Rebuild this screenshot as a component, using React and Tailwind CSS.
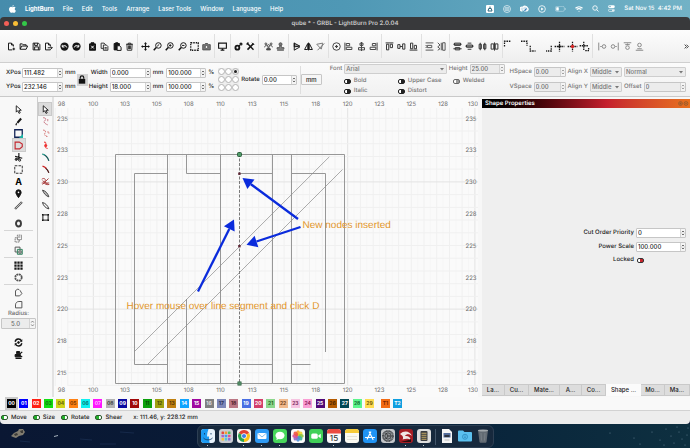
import React, { useId } from "react";

const K = "#161616";

/* 12x12 line icons used by the tool bars */
const ICONS = {
  newFile: <><path d="M7 10.5H2V1.5h4l2.5 2.5v2M6 1.5V4h2.5" /><path d="M9 7.5v3.5M7.3 9.3h3.5" /></>,
  open: <path d="M1.5 9.5V2.5h3l1 1.2h4v1.6M1.5 9.7l2-4.3h8l-2 4.3z" />,
  save: <><path d="M1.5 1.5h7l2 2v7h-9z" /><path d="M3.5 1.5v3h4v-3M3.5 10.5v-4h5v4" /></>,
  exportFile: <path d="M8.500 6V4L6 1.500H2v9h6.500V9.500M6 1.500V4h2.500M5 7.700h6M9.500 6.200L11 7.700 9.500 9.200" />,
  undo: <><circle cx="6" cy="6" r="5.500" fill={K} stroke="none" /><path stroke="#fff" d="M3.200 6.500a3 3 0 0 1 5.700.8M3 3.800v2.900h2.900" /></>,
  redo: <><circle cx="6" cy="6" r="5.500" fill={K} stroke="none" /><path stroke="#fff" d="M8.800 6.500a3 3 0 0 0-5.700.8M9 3.800v2.900H6.100" /></>,
  cut: <><path fill={K} d="M2 2.500h8v8.500H2zM4 1h4v1.500H4z" /><path stroke="#fff" d="M4.300 5l3.400 3.600M7.700 5L4.300 8.600" /></>,
  copy: <g stroke="#333"><path d="M1.500 1.500h4l2 2v5h-6z" /><path fill="#f6f6f6" d="M4.500 4h4l2 2v5h-6z" /><path d="M6 7.500h3M6 9.200h3" /></g>,
  paste: <><path fill={K} d="M1.500 2h7v8.500h-7zM3.500 1h3v1.200h-3z" /><path fill="#f6f6f6" d="M5.500 5h3.200L10.800 7v4.200H5.500z" /></>,
  trash: <g stroke="#333"><path d="M1.500 3h9M4.500 3V1.500h3V3M2.500 3l.5 8h6l.5-8z" /><path d="M4.800 4.500v5M7.200 4.500v5M6 4.500v5" /></g>,
  move: <><path strokeWidth="1.600" d="M6 1.500v9M1.500 6h9" /><path fill={K} d="M6 .3L7.500 2.300h-3zM6 11.700L4.500 9.700h3zM.3 6l2-1.500v3zM11.700 6l-2 1.500v-3z" strokeWidth=".4" /></>,
  zoom: <><circle cx="7.200" cy="4.600" r="3.700" /><path strokeWidth="2" d="M4.300 7.300L1 11" /><path d="M5.500 5.700l2.800-2.500" /></>,
  zoomIn: <><circle cx="7.200" cy="4.600" r="3.700" /><path strokeWidth="2" d="M4.300 7.300L1 11" /><path d="M5.400 4.600h3.200M7 3v3.200" /></>,
  zoomOut: <><circle cx="7.200" cy="4.600" r="3.700" /><path strokeWidth="2" d="M4.300 7.300L1 11" /><path d="M5.400 4.600h3.200" /></>,
  frame: <path strokeWidth="1.700" strokeDasharray="2 1.330" d="M1 1h10v10H1z" />,
  camera: <g stroke="#555"><path fill="#777" d="M1 3.500h2.500L4.500 2h3l1 1.500H11v7H1z" /><circle cx="6" cy="6.700" r="2" fill="#eee" /></g>,
  monitor: <><path strokeWidth="1.500" d="M.8 1.500h10.400v6.800H.8z" /><path strokeWidth="1.600" d="M6 8.500v2M3.500 10.800h5" /></>,
  gears: <><circle cx="4.500" cy="7.500" r="2.600" strokeWidth="2.500" /><circle cx="9.300" cy="2.700" r="1.300" strokeWidth="1.600" /><path d="M6.500 5.500l2-2" /></>,
  wrench: <><path strokeWidth="2.200" d="M2 10.200L10 2" /><path strokeWidth="1.800" d="M2 2l8 8.300M.8 3.200L3.200.8" /><path d="M8 1l3 3" /></>,
  group: <g stroke="#444"><circle cx="6" cy="5" r="1.500" /><path d="M3.500 10.500c0-4 5-4 5 0z" fill="#555" /><circle cx="2.500" cy="2.500" r="1.200" /><circle cx="9.500" cy="2.500" r="1.200" /><path d="M.8 7c0-2 2-2.500 3-2M11.200 7c0-2-2-2.500-3-2" /></g>,
  stamp: <g stroke="#555"><circle cx="6" cy="3" r="2" fill="#777" /><path fill="#999" d="M5 5h2v2.500h3.500V9.500h-9V7.500H5zM1.500 11h9" /></g>,
  flip: <><path fill="#999" d="M3 1.500l7.500 4L3 6.500z" /><path d="M3 10.800l7.500-4.200M3 1v10" /></>,
  mirror: <path d="M5 2v8H.8zM7 2v8h4.200zM6 .8v10.400" />,
  mirrorLine: <g stroke="#777"><path d="M1 3l8-1.500-2 8zM2 11L11 2" /></g>,
  target: <g stroke="#444"><circle cx="6" cy="6" r="5" /><path strokeWidth="1.600" d="M6 4v4M4 6h4" /></g>,
  alignL: <g stroke="#444"><path d="M1.200.8v10.400M3 2h4.500v3H3zM3 7h7.500v3H3z" /></g>,
  alignC: <g stroke="#444"><path d="M4 1.500h4v3H4zM2 7.500h8v3H2zM6 0v12" /></g>,
  alignR: <g stroke="#444"><path d="M10.800.8v10.400M4.500 2H9v3H4.500zM1.500 7H9v3H1.500z" /></g>,
  alignT: <g stroke="#333"><path d="M.8 1.200h10.400M2 3v7.500h3V3zM7 3v4.500h3V3z" /></g>,
  alignM: <g stroke="#333"><path d="M1 3.500h3v5H1zM7.500 2.500h3v7h-3zM4 6h3.500" /></g>,
  alignB: <g stroke="#333"><path d="M.8 10.800h10.400M2 1.500V9h3V1.500zM7 4.500V9h3V4.500z" /></g>,
  spreadV: <g stroke="#555"><path d="M.8 1.200h10.400M.8 10.800h10.400M3 4.500h6v3H3zM.8 4l2 2-2 2" /></g>,
  spreadH: <g stroke="#555"><path d="M10.800 1v10H7.500V1zM1 1l3 3-3 2.500 3 2.500-3 2M5.700 1v10" /></g>,
  distV: <g stroke="#333"><path d="M2 1.500h8v3H2zM3 7.500h6v3H3zM.5 3h11M.5 9h11" /></g>,
  distC: <g stroke="#333"><path d="M2 4h8v3H2zM3.500 1.500h5M3.500 9.700h5M.5 5.500h11" /></g>,
  distH: <g stroke="#333"><path d="M1.500 3h3v6h-3zM7.500 3h3v6h-3zM3 1v10M9 1v10" /></g>,
  distM: <g stroke="#333"><path d="M1.500 2.500H5v7H1.500zM7 2.500h3.500v7H7zM6 .5v11" /></g>,
  cornerTL: <path strokeWidth="1.700" strokeDasharray="2 1.200" d="M-2 6V-1H6" />,
  cornerTR: <path strokeWidth="1.700" strokeDasharray="2 1.200" d="M4 -1h8V5" />,
  cornerBL: <path strokeWidth="1.700" strokeDasharray="2 1.200" d="M-1 5v7h7" />,
  cornerBR: <path strokeWidth="1.700" strokeDasharray="2 1.200" d="M11 5v7H4" />,
  crossK: <><path strokeWidth="1.700" strokeDasharray="2 1" d="M6 -.5v13M-.5 6h13" /><circle cx="6" cy="6" r="1.200" fill={K} /></>,
  crossR: <><path strokeWidth="1.700" strokeDasharray="2 1" d="M6 -.5v13M-.5 6h13" /><circle cx="6" cy="6" r="1.700" fill="#d22" stroke="#d22" /></>,
  crossD: <path strokeWidth="1.700" strokeDasharray="2 1" d="M5 -.5v11M-.5 5H11M7 11.500h5M11.500 8v3" />,
  moveL: <g stroke="#888"><path d="M1 .8v10.400M3 6h2" /><circle cx="8" cy="6" r="2.400" /></g>,
  moveR: <g stroke="#888"><path d="M11 .8v10.400M7 6h2" /><circle cx="4" cy="6" r="2.400" /></g>,
  moveT: <g stroke="#888"><path d="M1 1h10M6 2v2M3 3.500h6" /><circle cx="6" cy="7.500" r="2.400" /></g>,
  moveB: <g stroke="#888"><path d="M1 11h10M3 9h6" /><circle cx="6" cy="4" r="2.400" /></g>,
  arrow: <path fill="#fff" strokeWidth="1.200" d="M3 1v8.500l2-2 1.700 3.700 1.600-.8L6.700 7h3z" />,
  pencil: <><path strokeWidth="2.800" d="M9.500 2L4.500 7.800" /><path strokeWidth="1.600" d="M3.500 8.300L2.500 11" /></>,
  square: <><path stroke="#125" strokeWidth="1.700" d="M1 1h10v10H1z" /><path fill="#19b5a5" stroke="none" d="M12 6.500V12H6.500z" /></>,
  polygon: <path stroke="#c4262e" strokeWidth="1.500" d="M1.500 1.500h5.500l4 2.500v3.500L7.500 10.500h-6z" />,
  scissors: <><path strokeWidth="1.500" d="M6.500 0v7.500M1.500 4.500L11 7M7 7.500L2 8.500" /><circle cx="3" cy="8.500" r="1.400" /><circle cx="7.500" cy="9.500" r="1.400" /></>,
  select: <path stroke="#333" strokeDasharray="3.500 1.500" d="M1 1h10v10H1z" />,
  pin: <><path fill={K} d="M6 11.500C4 8.500 2.500 6.500 2.500 4.500a3.500 3.500 0 0 1 7 0C9.500 6.500 8 8.500 6 11.500z" /><circle cx="6" cy="4.500" r="1.100" fill="#fff" stroke="none" /></>,
  ruler: <g stroke="#555"><path fill="#bbb" d="M1 9.500L9.500 1l1.500 1.500L2.500 11z" /></g>,
  ring: <ellipse cx="6" cy="6" rx="3.300" ry="4" stroke="#3c3c3c" strokeWidth="2.600" />,
  weld: <g stroke="#777"><path d="M1.500 5h3V1.500H10v6H7v3.200H1.500z" strokeDasharray="2 .7" /><path d="M4.500 5v2.700H7M5.500 4h3" /></g>,
  subtract: <><path stroke="#555" d="M1.500 1.500H8V8H1.500z" /><path stroke="#2f7f5b" fill="#dcefe4" d="M4.500 4.500H11V11H4.500z" /><path stroke="#555" d="M6.500 6.500h3v3h-3z" /></>,
  grid: <path fill={K} stroke="none" d="M.5.5h3v3h-3zM4.500.5h3v3h-3zM8.500.5h3v3h-3zM.5 4.500h3v3h-3zM4.500 4.500h3v3h-3zM8.500 4.500h3v3h-3zM.5 8.500h3v3h-3zM4.500 8.500h3v3h-3zM8.500 8.500h3v3h-3z" />,
  circleArray: <circle cx="6" cy="6" r="4.300" stroke="#555" strokeWidth="2.300" strokeDasharray="2.600 .78" />,
  offset: <path stroke="#555" d="M2 3.500v7h5.500L10.500 7.500 8 3M2 3.500L5 1.500l2 .7" />,
  radius: <path stroke="#555" d="M2 10.500V6.500C2 4 4 2 6.500 2h4v8.500z" />,
  rotate: <><path strokeWidth="1.900" d="M1.500 5a4.500 4.500 0 0 1 8.500-1M10.500 7A4.500 4.500 0 0 1 2 8" /><circle cx="6" cy="6" r="1.200" fill={K} /><path fill={K} d="M10.800 2v3H8zM1.200 10V7H4z" strokeWidth=".4" /></>,
  printer: <><path fill={K} d="M1.500 6h7v3h-7zM3.500 2h4v3h-4z" /><path strokeWidth="1.700" d="M2 11h8M7.500 5.500l3.500-3M8 8l3 .8" /></>,
  nodeS: <path stroke="#b56" strokeDasharray="2 .8" d="M3 1c4 0 4 2.500 2 4s0 4 4 5.500M9 3v3" />,
  nodeM: <path stroke="#c55" strokeDasharray="1.700 1" d="M3 1.500c4 0 3 3 2 4.500s1 4 4 4M8.500 4h2v2" />,
  nodeX: <><path stroke="#e55" strokeWidth="1.400" d="M4 1.500c3 0 3 2 2 4s0 4 3 4.500" /><circle cx="6.300" cy="6" r="2" fill="#e33" stroke="none" /></>,
  curveG: <><path stroke="#155" strokeWidth="1.600" d="M2 1.500c4 1 7 4 8.500 9" /><path stroke="#2a9" d="M2 1.500l3 1" /></>,
  curveR: <><path stroke="#411" strokeWidth="1.600" d="M6 4c2 1.500 3.500 4 4.500 6.500" /><path stroke="#c22" strokeWidth="2" d="M2 1.500c2 .5 3.500 1.300 5 3" /></>,
  delNode: <path stroke="#a44" d="M1 3c4-3 6 1 4 3s1 5 6 4M2 10L10 2M2 5l8 5M1 8h10" />,
  curveD: <path stroke="#444" fill="#bbb" d="M2 1.500c4 1 7 4 8.500 9C7 9.500 3.500 6 2 1.500z" />,
  curveE: <path stroke="#333" d="M2 2c4 1 7 4 8.500 8.500C6 9.500 3 6 2 2z" />,
  nodeBox: <><path d="M2.500 2.500h7v7h-7z" /><path fill={K} stroke="none" d="M1.300 1.300h2v2h-2zM8.700 1.300h2v2h-2zM1.300 8.700h2v2h-2zM8.700 8.700h2v2h-2z" /></>,
};

function Icon({ name, className = "size-[9px]" }) {
  return (
    <svg viewBox="0 0 12 12" className={`${className} shrink-0 overflow-visible`} fill="none" stroke={K} strokeWidth="1.3" aria-hidden="true">
      {ICONS[name]}
    </svg>
  );
}

const MENUS = ["File", "Edit", "Tools", "Arrange", "Laser Tools", "Window", "Language", "Help"];

function MenuBar() {
  return (
    <header className="flex h-[17px] shrink-0 items-center gap-[9px] bg-linear-to-r from-[#468cac] via-[#4f98b5] to-[#72b2c6] pr-2 pl-[9px] text-white">
      <svg viewBox="0 0 14 16" className="h-[8px] w-[7px]" fill="#fff" aria-hidden="true">
        <path d="M9.500 0c.1 1.700-1.300 3.200-2.800 3.200C6.500 1.700 8 .2 9.500 0zM7 4.300c.7 0 1.700-.9 3.200-.8 1 0 2.300.6 3 1.700-2.600 1.600-2.100 5.200.5 6.200-.6 1.700-2 4.300-3.600 4.300-1.100 0-1.600-.7-2.900-.7-1.200 0-1.700.7-2.800.7C2.600 15.700 0 12 0 8.700 0 5.400 2 3.600 4 3.600c1.400 0 2.200.7 3 .7z" />
      </svg>
      <nav className="flex items-center gap-[9px]">
        <button className="font-bold">LightBurn</button>
        {MENUS.map((m) => <button key={m} className="font-medium">{m}</button>)}
      </nav>
      <div className="ml-auto flex items-center gap-[9px]">
        <svg viewBox="0 0 16 16" className="size-[8px]" aria-hidden="true"><rect width="16" height="16" rx="2" fill="#fff" /><path d="M4 12l1.500-5h5l1.500 5zM8 3v4" stroke="#33687e" strokeWidth="2" fill="none" /></svg>
        <svg viewBox="0 0 16 16" className="size-[8px]" fill="none" stroke="#fff" strokeWidth="1.300" aria-hidden="true"><circle cx="8" cy="8" r="7" /><path d="M4 5.500h8M3 8h10M4 10.500h8" /></svg>
        <svg viewBox="0 0 18 14" className="h-[7px] w-[9px]" fill="none" stroke="#fff" strokeWidth="2.200" aria-hidden="true"><path d="M5 12a4 4 0 1 1 1-7.500A5 5 0 0 1 15 6a3.500 3.500 0 0 1-1 6H9L5.500 8" fill="#cfe4ee" /><path d="M9 12l4-5" stroke="#1a6bb0" /></svg>
        <svg viewBox="0 0 16 16" className="size-[8px]" fill="none" stroke="#fff" strokeWidth="1.600" aria-hidden="true"><circle cx="8" cy="8" r="6.700" /><path d="M6.300 5l5 3-5 3z" fill="#fff" stroke="none" /></svg>
        <svg viewBox="0 0 22 12" className="h-[6px] w-[11px]" aria-hidden="true"><rect x=".7" y=".7" width="18" height="10" rx="3" fill="none" stroke="#b9d9e4" strokeWidth="1.200" /><rect x="2.500" y="2.500" width="5" height="6.500" rx="1" fill="#fff" /><path d="M20.500 4v4" stroke="#b9d9e4" strokeWidth="1.500" /></svg>
        <svg viewBox="0 0 16 12" className="h-[6px] w-[8px]" fill="none" stroke="#fff" strokeWidth="2.400" aria-hidden="true"><path d="M1 4.500c4-4 10-4 14 0M3.500 7.300c2.500-2.500 6.500-2.500 9 0" /><circle cx="8" cy="10.300" r="1" fill="#fff" stroke="none" /></svg>
        <svg viewBox="0 0 14 14" className="size-[7px]" fill="none" stroke="#fff" strokeWidth="1.700" aria-hidden="true"><circle cx="6" cy="6" r="4.500" /><path d="M9.300 9.300L13 13" /></svg>
        <svg viewBox="0 0 14 14" className="size-[7px]" aria-hidden="true"><rect x=".5" y=".5" width="13" height="5.500" rx="2.700" fill="#fff" /><circle cx="4" cy="3.200" r="1.500" fill="#5fa5bd" /><rect x="1" y="8.300" width="12" height="4.800" rx="2.400" fill="none" stroke="#fff" strokeWidth="1.200" /><circle cx="10" cy="10.700" r="1.800" fill="#fff" /></svg>
        <span className="font-medium whitespace-pre">Sat Nov 15  4:42 PM</span>
      </div>
    </header>
  );
}

function TitleBar() {
  return (
    <div className="flex h-[13px] shrink-0 items-center rounded-t-[4px] bg-[#38393b] px-1">
      <div className="flex flex-1 gap-1">
        <button aria-label="Close" className="size-[5px] rounded-full bg-[#f45f57]" />
        <button aria-label="Minimize" className="size-[5px] rounded-full bg-[#f8bd35]" />
        <button aria-label="Zoom" className="size-[5px] rounded-full bg-[#33c748]" />
      </div>
      <h1 className="font-semibold text-[#c9c9ca]">qube * - GRBL - LightBurn Pro 2.0.04</h1>
      <div className="flex-1" />
    </div>
  );
}

const GROUPS = [
  { w: "w-[46px]", items: ["newFile", "open", "save", "exportFile"] },
  { w: "w-[21px]", items: ["undo", "redo"] },
  { w: "w-[46px]", items: ["cut", "copy", "paste", "trash"] },
  { w: "w-[70px]", items: ["move", "zoom", "zoomIn", "zoomOut", "frame", "camera"] },
  { w: "w-[9px]", items: ["monitor"] },
  { w: "w-[21px]", items: ["gears", "wrench"], wide: true },
  { w: "w-[21px]", items: ["group", "stamp"] },
  { w: "w-[33px]", items: ["flip", "mirror", "mirrorLine"] },
  { w: "w-[46px]", items: ["target", "alignL", "alignC", "alignR"] },
  { w: "w-[33px]", items: ["alignT", "alignM", "alignB"] },
  { w: "w-[21px]", items: ["spreadV", "spreadH"] },
  { w: "w-[46px]", items: ["distV", "distC", "distH", "distM"] },
  { w: "w-[83px]", items: ["cornerTL", "cornerTR", "cornerBL", "cornerBR", "crossK", "crossR", "crossD"], wide: true },
  { w: "w-[46px]", items: ["moveL", "moveR", "moveT", "moveB"], last: true },
];

function ToolBar() {
  return (
    <div className="flex h-[33px] shrink-0 items-center gap-[3px] border-b border-[#cfcfcf] bg-linear-to-b from-[#fdfdfd] to-[#eeeeee] pr-px pl-[7px]">
      {GROUPS.map((g, i) => (
        <React.Fragment key={i}>
          <div className={`flex shrink-0 justify-between ${g.w}`}>
            {g.items.map((n) => <button key={n} aria-label={n}><Icon name={n} /></button>)}
          </div>
          {!g.last && <div className={`h-6 shrink-0 border-l border-[#e0e0e0] ${g.wide ? "w-[3px]" : "w-px"}`} />}
        </React.Fragment>
      ))}
      <button aria-label="More tools" className="ml-auto">
        <svg viewBox="0 0 8 8" className="size-[5px]" fill="none" stroke="#333" strokeWidth="1.400" aria-hidden="true"><path d="M1 1l3 3-3 3M4 1l3 3-3 3" /></svg>
      </button>
    </div>
  );
}

function Spin({ label, value, width, unit, labelClass = "", dim, tone = "bg-white", hideLabel }) {
  const id = useId();
  return (
    <div className="flex items-center gap-[2px]">
      {hideLabel ? null : <label htmlFor={id} className={`text-right whitespace-nowrap ${labelClass}`}>{label}</label>}
      <div className={`flex h-[10px] shrink-0 items-center rounded-[1px] border border-[#c6c6c6] ${tone} ${width}`}>
        <input id={id} aria-label={label} defaultValue={value} className={`h-[8px] w-full min-w-0 bg-transparent pl-px leading-[8px] outline-none ${dim ? "text-[#6a6a6a]" : "text-[#1b1b1b]"}`} />
        <svg viewBox="0 0 10 16" className="h-[8px] w-[5px] shrink-0 border-l border-[#d4d4d4] bg-[#f4f4f4]" fill="none" stroke={dim ? "#888" : "#444"} strokeWidth="2" aria-hidden="true"><path d="M2.500 6L5 3l2.500 3M2.500 10L5 13l2.500-3" /></svg>
      </div>
      {unit && <span>{unit}</span>}
    </div>
  );
}

function Pick({ label, value, width, hideLabel }) {
  const id = useId();
  return (
    <div className="flex items-center gap-[2px]">
      {!hideLabel && <label htmlFor={id} className="whitespace-nowrap">{label}</label>}
      <div className={`flex h-[10px] items-center rounded-[1px] border border-[#cecece] bg-[#ececec] pr-[2px] ${width}`}>
        <select id={id} aria-label={label} className="h-[8px] w-full min-w-0 appearance-none bg-transparent pl-px leading-[8px] outline-none">
          <option>{value}</option>
        </select>
        <svg viewBox="0 0 8 6" className="h-[3px] w-[4px] shrink-0" fill="#777" aria-hidden="true"><path d="M0 0h8L4 5z" /></svg>
      </div>
    </div>
  );
}

const TRACKS = {
  off: "border-[#222] bg-linear-to-r from-white from-45% to-[#222] to-45%",
  dim: "border-[#666] bg-linear-to-r from-white from-45% to-[#999] to-45%",
  on: "border-[#2a5a2a] bg-linear-to-r from-[#25b32c] from-50% to-white to-50%",
  red: "border-[#333] bg-linear-to-r from-white from-45% to-[#c8262c] to-45%",
};

function Toggle({ label, kind, before }) {
  return (
    <label className="flex items-center gap-[3px] whitespace-nowrap">
      {before && label}
      <input type="checkbox" defaultChecked={kind === "on"} className={`h-[5px] w-[7px] shrink-0 appearance-none rounded-[2px] border ${TRACKS[kind]}`} />
      {!before && label}
    </label>
  );
}

function PropertyBar() {
  return (
    <div className="flex h-[34px] shrink-0 items-center border-b border-[#c9c9c9] bg-linear-to-b from-[#fbfbfb] to-[#f1f1f1] pr-1 pl-[6px] text-[#222]">
      <div className="flex shrink-0 flex-col gap-1">
        <Spin label="XPos" labelClass="w-[14px]" value="111.482" width="w-[41px]" unit="mm" />
        <Spin label="YPos" labelClass="w-[14px]" value="232.146" width="w-[41px]" unit="mm" />
      </div>
      <button aria-label="Lock aspect ratio" className="ml-px flex h-[12px] w-[11px] shrink-0 items-center justify-center bg-[#d2d2d2]">
        <svg viewBox="0 0 12 14" className="h-[9px] w-[8px]" aria-hidden="true"><path d="M1 6h10v7.500H1z" fill="#111" /><path d="M3.300 6V4a2.700 2.700 0 0 1 5.400 0v2" fill="none" stroke="#111" strokeWidth="1.800" /></svg>
      </button>
      <div className="ml-px flex shrink-0 flex-col gap-1">
        <Spin label="Width" labelClass="w-[19px]" value="0.000" width="w-[41px]" unit="mm" />
        <Spin label="Height" labelClass="w-[19px]" value="18.000" width="w-[41px]" unit="mm" />
      </div>
      <div className="ml-[3px] flex shrink-0 flex-col gap-1">
        <Spin label="Width percent" hideLabel value="100.000" width="w-[40px]" unit="%" />
        <Spin label="Height percent" hideLabel value="100.000" width="w-[40px]" unit="%" />
      </div>
      <div role="radiogroup" aria-label="Anchor" className="ml-[4px] grid shrink-0 grid-cols-3 gap-x-0 gap-y-px bg-[#eeeeee]">
        {Array.from({ length: 9 }, (_, i) => (
          <input key={i} type="radio" name="anchor" aria-label={`Anchor ${i + 1}`} defaultChecked={i === 2} className="size-[7px] appearance-none rounded-full border border-[#b4b4b4] bg-white checked:bg-[#222] checked:bg-clip-content checked:p-px" />
        ))}
      </div>
      <div className="ml-[2px] shrink-0"><Spin label="Rotate" value="0.00" width="w-[35px]" /></div>
      <div className="ml-[3px] h-7 shrink-0 border-l border-[#dedede]" />
      <button className="h-[11px] w-[21px] shrink-0 rounded-[1px] border border-[#c6c6c6] bg-[#f6f6f6]">mm</button>
      <div className="ml-2 flex flex-1 flex-col gap-[3px] text-[#777]">
        <div className="flex items-center gap-[2px]">
          <label htmlFor="font">Font</label>
          <div className="flex h-[10px] flex-1 items-center rounded-[1px] border border-[#cecece] bg-[#ececec] pr-[2px]">
            <select id="font" className="h-[8px] w-full appearance-none bg-transparent pl-px leading-[8px] outline-none"><option>Arial</option></select>
            <svg viewBox="0 0 8 6" className="h-[3px] w-[4px] shrink-0" fill="#777" aria-hidden="true"><path d="M0 0h8L4 5z" /></svg>
          </div>
          <Spin label="Height" value="25.00" width="w-[35px]" dim tone="bg-[#ececec]" />
        </div>
        <div className="grid grid-cols-[54px_55px_auto] gap-y-[2px] pl-[14px]">
          <Toggle label="Bold" kind="off" />
          <Toggle label="Upper Case" kind="off" />
          <Toggle label="Welded" kind="dim" />
          <Toggle label="Italic" kind="off" />
          <Toggle label="Distort" kind="off" />
        </div>
      </div>
      <div className="ml-[5px] flex shrink-0 flex-col gap-[5px] text-[#777]">
        <div className="flex gap-[2px]">
          <Spin label="HSpace" labelClass="w-[22px]" value="0.00" width="w-[32px]" dim tone="bg-[#ececec]" />
          <Pick label="Align X" value="Middle" width="w-[32px]" />
          <Pick label="Mode" hideLabel value="Normal" width="w-[62px]" />
        </div>
        <div className="flex gap-[2px]">
          <Spin label="VSpace" labelClass="w-[22px]" value="0.00" width="w-[32px]" dim tone="bg-[#ececec]" />
          <Pick label="Align Y" value="Middle" width="w-[32px]" />
          <Spin label="Offset" value="0" width="w-[42px]" dim tone="bg-[#ececec]" />
        </div>
      </div>
    </div>
  );
}

function Tool({ name, active }) {
  return (
    <button aria-label={name} className={`flex size-[12px] shrink-0 items-center justify-center ${active ? "bg-[#dcdcdc] outline outline-[#c9c9c9]" : ""}`}>
      <Icon name={name} />
    </button>
  );
}

function Rule() {
  return <div className="my-px w-[29px] border-t border-[#d6d6d6]" />;
}

function SideTools() {
  return (
    <div className="flex w-[38px] shrink-0 flex-col items-center border-r border-[#cdcdcd] bg-[#f8f8f8] pt-[6px] text-[#6d6d6d]">
      <Tool name="arrow" />
      <Tool name="pencil" />
      <Tool name="square" />
      <Tool name="polygon" active />
      <Tool name="scissors" />
      <Tool name="select" />
      <button className="size-[12px] shrink-0 text-[9px] leading-none font-bold text-black">A</button>
      <Tool name="pin" />
      <Tool name="ruler" />
      <div className="mt-[6px]"><Tool name="ring" /></div>
      <Rule />
      <Tool name="weld" />
      <Tool name="subtract" />
      <Rule />
      <Tool name="grid" />
      <Tool name="circleArray" />
      <Rule />
      <Tool name="offset" />
      <Tool name="radius" />
      <label htmlFor="radius" className="leading-[8px]">Radius:</label>
      <div className="flex h-[11px] w-[35px] shrink-0 items-center rounded-[1px] border border-[#c6c6c6] bg-[#ececec]">
        <input id="radius" defaultValue="5.0" className="h-full w-full min-w-0 bg-transparent text-center outline-none" />
        <svg viewBox="0 0 10 16" className="h-[9px] w-[6px] shrink-0 border-l border-[#d4d4d4] bg-[#f4f4f4]" fill="none" stroke="#888" strokeWidth="2" aria-hidden="true"><path d="M2.500 6L5 3l2.500 3M2.500 10L5 13l2.500-3" /></svg>
      </div>
      <div className="mt-[7px] flex flex-col"><Tool name="rotate" /><Tool name="printer" /></div>
    </div>
  );
}

const NODE_TOOLS = ["nodeS", "nodeM", "nodeX", "curveG", "curveR", "delNode", "curveD", "curveE", "nodeBox"];

function NodeTools() {
  return (
    <div className="flex w-[16px] shrink-0 flex-col items-center border-r-2 border-[#e2e2e2] bg-[#f8f8f8] pt-[6px]">
      <Tool name="arrow" active />
      {NODE_TOOLS.map((n) => <Tool key={n} name={n} />)}
    </div>
  );
}

/* Workspace units: 12.72px per millimetre */
const U = 12.72;
const gx = (v) => 93.3 + (v - 100) * U;
const gy = (v) => 118.3 + (235 - v) * U;
const COLS = [97.5, 100, 102.5, 105, 107.5, 110, 112.5, 115, 117.5, 120, 122.5, 125, 127.5];
const ROWS = [235, 232.5, 230, 227.5, 225, 222.5, 220, 217.5, 215];

function Arrow({ x1, y1, x2, y2 }) {
  const a = Math.atan2(y2 - y1, x2 - x1);
  const bx = x2 - 10.5 * Math.cos(a);
  const by = y2 - 10.5 * Math.sin(a);
  const px = 6 * Math.sin(a);
  const py = -6 * Math.cos(a);
  return (
    <g fill="#0a2bdc">
      <path d={`M${x1} ${y1}L${bx} ${by}`} stroke="#0a2bdc" strokeWidth="2.300" />
      <path d={`M${x2} ${y2}L${bx + px} ${by + py}L${bx - px} ${by - py}z`} />
    </g>
  );
}

function Workspace() {
  const xs = Array.from({ length: 34 }, (_, i) => 97 + i);
  const ys = Array.from({ length: 26 }, (_, i) => 213 + i);
  return (
    <div className="min-w-0 flex-1 bg-[#fafafa]">
      <svg viewBox="54 97 425 300" preserveAspectRatio="xMinYMin slice" className="block h-full w-full" fontSize="6" role="img" aria-label="Workspace">
        <g strokeWidth="1">
          {xs.map((v) => <path key={v} d={`M${gx(v + 0.5)} 108V386`} stroke="#f6f6f6" />)}
          {xs.map((v) => <path key={v} d={`M${gx(v)} 108V386`} stroke={v % 10 === 0 ? "#e3e3e3" : "#f0f0f0"} />)}
          {ys.filter((v) => gy(v) > 108 && gy(v) < 386).map((v) => <path key={v} d={`M68 ${gy(v)}H478`} stroke={v % 10 === 0 ? "#e3e3e3" : "#f0f0f0"} />)}
        </g>
        <g fill="#6b6b6b" fontWeight="400">
          {COLS.map((v) => <text key={v} x={gx(v)} y="106.300" textAnchor="middle">{Math.round(v)}</text>)}
          {COLS.map((v) => <text key={v} x={gx(v)} y="392.300" textAnchor="middle">{Math.round(v)}</text>)}
          <text x="478" y="106.300" textAnchor="end">130</text>
          <text x="478" y="392.300" textAnchor="end">130</text>
          {ROWS.map((v) => <text key={v} x="57" y={gy(v) + 2.3}>{Math.round(v)}</text>)}
          {ROWS.map((v) => <text key={v} x="476.500" y={gy(v) + 2.3} textAnchor="end">{Math.round(v)}</text>)}
        </g>
        <g fill="none" stroke="#979797" strokeWidth="1">
          <path d="M115.500 154.500H344.500V383.500H115.500z" />
          <path d="M167.500 154.500V383.500M220.500 154.500V383.500M272.500 154.500V383.500M291.500 154.500V383.500" />
          <path d="M186.500 154.500V173.500H220.500M186.500 299V383.500" />
          <path d="M167.500 173.500H134.500V364.500H167.500M186.500 364.500H220.500M239.500 364.500H272.500M291.500 364.500H310.500" />
          <path d="M239.500 173.500H272.500M291.500 173.500H325.500V352" />
        </g>
        <path d="M134.500 351.500L329.300 156.800M147.500 364.500L342.500 169.500" fill="none" stroke="#8a8a8a" strokeWidth=".7" />
        <path d="M239.500 154V384" stroke="#7a7a7a" strokeWidth="1" strokeDasharray="3 1.500" />
        <rect x="237.500" y="152.500" width="4" height="4" rx="1" fill="#4f9a68" stroke="#2b5d3c" strokeWidth="1" />
        <rect x="237.800" y="381.800" width="3.400" height="3.400" fill="#4f8a64" stroke="#3d6b4b" strokeWidth=".6" />
        <rect x="238.200" y="172.500" width="2.400" height="2.400" fill="#5b2432" />
        <rect x="238.200" y="245" width="2.400" height="2.400" fill="#5b2432" />
        <Arrow x1={298} y1={219} x2={242.5} y2={178} />
        <Arrow x1={300.500} y1={227} x2={246.5} y2={244.8} />
        <Arrow x1={198} y1={291.5} x2={234} y2={219.5} />
        <g fill="#e2962b" fontSize="10" fontWeight="400" fontFamily="Liberation Sans, Arial, sans-serif">
          <text x="302.500" y="228">New nodes inserted</text>
          <text x="126.500" y="308.500">Hover mouse over line segment and click D</text>
        </g>
      </svg>
    </div>
  );
}

const TABS = [
  ["La...", "w-[23px]"], ["Cu...", "w-[24px]"], ["Mate...", "w-[31px]"], ["A...", "w-[22px]"],
  ["Co...", "w-[24px]"], ["Shape ...", "w-[35px]"], ["Mo...", "w-[24px]"], ["Ma...", "w-[25px]"],
];

function ShapePanel() {
  return (
    <aside className="flex w-[212px] shrink-0 flex-col bg-[#f7f7f7] pt-[2px] pl-[4px]">
      <div className="flex h-[9px] shrink-0 items-center justify-between bg-linear-to-r from-black via-[#c51f2d] via-60% to-[#e8701d] pr-px pl-[3px]">
        <h2 className="font-semibold text-white">Shape Properties</h2>
        <svg viewBox="0 0 22 10" className="h-[5px] w-[11px]" fill="none" stroke="#8c5a30" strokeWidth="1.600" aria-hidden="true"><circle cx="5" cy="5" r="3.800" /><path d="M3 5h4M5 3v4" /><circle cx="16" cy="5" r="3.800" /><path d="M14.500 3.500l3 3M17.500 3.500l-3 3" /></svg>
      </div>
      <div className="flex flex-1 flex-col items-end justify-center gap-1 bg-[#efefef] pr-1 text-[#222]">
        <Spin label="Cut Order Priority" value="0" width="w-[50px]" />
        <Spin label="Power Scale" value="100.000" width="w-[50px]" />
        <div className="mr-[42px]"><Toggle label="Locked" kind="red" before /></div>
      </div>
      <div role="tablist" className="flex h-[13px] shrink-0 pb-px">
        {TABS.map(([t, w]) => (
          <button key={t} role="tab" aria-selected={t === "Shape ..."} className={`${w} text-[#222] ${t === "Shape ..." ? "bg-[#fbfbfb]" : "border border-l-0 border-[#c9c9c9] bg-[#dddddd]"}`}>{t}</button>
        ))}
      </div>
    </aside>
  );
}

const SWATCHES = [
  ["00", "#000000", "#fff"], ["01", "#0000ff", "#fff"], ["02", "#ff1f14", "#fff"], ["03", "#12df12", "#176b17"], ["04", "#d2d21a", "#66660c"],
  ["05", "#ff8114", "#7a3a05"], ["06", "#10f0f0", "#0a7676"], ["07", "#ff14ff", "#ffb0ff"], ["08", "#b4b4b4", "#444"], ["09", "#0909a0", "#fff"],
  ["10", "#a00909", "#fff"], ["11", "#0aa00a", "#064806"], ["12", "#a0a010", "#48480a"], ["13", "#c08010", "#4f3505"], ["14", "#10a4ff", "#fff"],
  ["15", "#a008a0", "#fff"], ["16", "#808080", "#ddd"], ["17", "#7d87b9", "#2a3157"], ["18", "#bb7784", "#4c2029"], ["19", "#4a6fe3", "#fff"],
  ["20", "#d33f6a", "#fff"], ["21", "#8cd78c", "#235f23"], ["22", "#f0b98d", "#6f4018"], ["23", "#f6c4e1", "#7c2e5d"], ["24", "#fa9ed4", "#8a1c5c"],
  ["25", "#500a78", "#fff"], ["26", "#b45a00", "#4c2600"], ["27", "#004754", "#fff"], ["28", "#5cf58c", "#0f6b30"], ["29", "#ffdb50", "#6b560a"],
];

function Swatch({ item: [t, bg, fg], active }) {
  return (
    <button className={`size-[9px] shrink-0 text-[5px] leading-none font-bold ${active ? "outline-2 outline-[#c9c9c9]" : ""}`} style={{ background: bg, color: fg }}>{t}</button>
  );
}

function Palette() {
  return (
    <div className="flex h-[14px] shrink-0 items-center gap-[7px] border-b border-[#d2d2d2] bg-[#f9f9f9] pl-[7px]">
      <div className="flex w-[367px] justify-between">
        {SWATCHES.map((s, i) => <Swatch key={s[0]} item={s} active={i === 0} />)}
      </div>
      <div className="flex gap-[3px]">
        <Swatch item={["T1", "#f26a12", "#7a2500"]} />
        <Swatch item={["T2", "#0f9fe0", "#fff"]} />
      </div>
    </div>
  );
}

function StatusBar() {
  return (
    <footer className="flex h-[13px] shrink-0 items-center gap-[6px] rounded-b-[4px] bg-[#ededed] pl-px text-[#222]">
      <Toggle label="Move" kind="on" />
      <Toggle label="Size" kind="on" />
      <Toggle label="Rotate" kind="on" />
      <Toggle label="Shear" kind="on" />
      <span className="ml-[5px]">x: 111.46, y: 228.12 mm</span>
    </footer>
  );
}

/* Dock icons, each on a 28x28 canvas */
const DOCK = [
  ["Finder", <><rect width="28" height="28" rx="6" fill="#e9f3fb" /><path d="M6 0h9c-2 5-3 10-3 15h4c0 5 .5 9 1.500 13H6a6 6 0 0 1-6-6V6a6 6 0 0 1 6-6z" fill="#1c9bf3" /><path d="M7 8v3M20 8v3M5 18c5 5 13 5 18 0" stroke="#123c66" strokeWidth="1.800" fill="none" /></>, true],
  ["Launchpad", <><rect width="28" height="28" rx="6" fill="#c9ccd1" />{["#e64c3c", "#f39c2f", "#4fc05d", "#b061c9", "#3b9ff0", "#e85588", "#f5c33a", "#56c7d9", "#8c6fe0"].map((c, i) => <rect key={c} x={5 + (i % 3) * 6.500} y={5 + Math.floor(i / 3) * 6.500} width="5" height="5" rx="1" fill={c} />)}</>],
  ["Chrome", <><rect width="28" height="28" rx="6" fill="#f4f4f4" /><path d="M14 14L3.600 8a12 12 0 0 1 20.800 0z" fill="#e34133" /><path d="M14 14L3.600 8A12 12 0 0 0 14 26z" fill="#2ba24c" /><path d="M14 14h0L24.400 8A12 12 0 0 1 14 26z" fill="#fbc116" /><circle cx="14" cy="14" r="5.500" fill="#fff" /><circle cx="14" cy="14" r="4.200" fill="#3f7fe8" /></>, true],
  ["Mail", <><rect width="28" height="28" rx="6" fill="#2f9bf5" /><rect x="5" y="8" width="18" height="12" rx="2" fill="#fff" /><path d="M6 9l8 7 8-7" fill="none" stroke="#5ea9e8" strokeWidth="1.500" /></>, true],
  ["Messages", <><rect width="28" height="28" rx="6" fill="#47d65b" /><ellipse cx="14" cy="13" rx="9" ry="7.500" fill="#fff" /><path d="M8 17l-1.500 5 6-2.500z" fill="#fff" /></>, true],
  ["Photos", <><rect width="28" height="28" rx="6" fill="#fafafa" />{["#f7a128", "#e9d12b", "#88c440", "#3fb59a", "#4b8fd9", "#8e6cc4", "#d6519b", "#ee5443"].map((c, i) => <ellipse key={c} cx="14" cy="8" rx="3.800" ry="5.500" fill={c} opacity=".9" transform={`rotate(${i * 45} 14 14)`} />)}</>],
  ["FaceTime", <><rect width="28" height="28" rx="6" fill="#40d058" /><rect x="4.500" y="9" width="13" height="10.500" rx="3" fill="#fff" /><path d="M18.500 13l5-3.500v9l-5-3.500z" fill="#fff" /></>],
  ["Calendar", <><rect width="28" height="28" rx="6" fill="#fafafa" /><path d="M0 9V6a6 6 0 0 1 6-6h16a6 6 0 0 1 6 6v3z" fill="#ec4a40" /><text x="14" y="24" textAnchor="middle" fontSize="16" fill="#333">15</text></>, true],
  ["Notes", <><rect width="28" height="28" rx="6" fill="#fbfaf3" /><path d="M0 8V6a6 6 0 0 1 6-6h16a6 6 0 0 1 6 6v2z" fill="#f7cb38" /><path d="M4 15h20M4 21h20" stroke="#d8d5c8" strokeWidth="1.200" /></>],
  ["App Store", <><rect width="28" height="28" rx="6" fill="#1f93f4" /><path d="M15.500 6L8.500 20M12.500 6l7.500 15M5 17h10.500M18.500 17H23" stroke="#fff" strokeWidth="2.400" strokeLinecap="round" /></>],
  ["Settings", <><rect width="28" height="28" rx="6" fill="#c4c7cb" /><circle cx="14" cy="14" r="10" fill="none" stroke="#3f4246" strokeWidth="3.500" strokeDasharray="2.200 .6" /><circle cx="14" cy="14" r="6.500" fill="#8b8f94" stroke="#3c3f43" strokeWidth="2" /><path d="M14 14L10 8M14 14h7M14 14l-4 6" stroke="#333" strokeWidth="1.800" /></>],
  ["LightBurn", <><rect width="28" height="28" rx="6" fill="#a51d24" /><path d="M2 10C10 2 22 4 26 14c-5-5-12-4-14 0 6-1 11 2 11 8-4-4-10-3-16-1 2-3 1-6-1-8" fill="#f0e6e4" /><path d="M4 26c6-3 14-2 20-6v6z" fill="#2a0d10" /></>, true],
  ["Stack", <><rect width="28" height="28" rx="6" fill="#dfdfdf" /><rect x="7" y="4" width="14" height="20" rx="2" fill="#3a3d42" /><path d="M9 8.500h10M9 12.500h10M9 16.500h10M9 20.500h10" stroke="#d4b56a" strokeWidth="1.800" /></>, true],
];
const DOCK_END = [
  ["Document", <><path d="M4 0h14l6 6v22H4z" fill="#f5f5f5" /><rect x="7" y="8" width="14" height="9" fill="#536c9b" /><path d="M9 14h10" stroke="#222" strokeWidth="3" /><path d="M9 22h10" stroke="#aaa" strokeWidth="1.500" /></>],
  ["Downloads", <><path d="M0 5a2 2 0 0 1 2-2h8l3 3h13a2 2 0 0 1 2 2v15a2 2 0 0 1-2 2H2a2 2 0 0 1-2-2z" fill="#5bc0ee" /><circle cx="14" cy="15.500" r="5" fill="none" stroke="#2a88bb" strokeWidth="1.600" /><path d="M14 12.500v5M12 15.500l2 2 2-2" stroke="#2a88bb" strokeWidth="1.400" fill="none" /></>],
  ["Trash", <><path d="M4 2h20l-3 24a2 2 0 0 1-2 1.500H9A2 2 0 0 1 7 26z" fill="#71777d" opacity=".85" /><ellipse cx="14" cy="3" rx="10" ry="2" fill="#a2a7ab" /><path d="M10 8l1 15M18 8l-1 15" stroke="#8c9298" /></>],
];

function DockItem({ item: [name, art, running] }) {
  return (
    <button aria-label={name} className="flex flex-col items-center gap-[2px]">
      <svg viewBox="0 0 28 28" className="size-[14px]" aria-hidden="true">{art}</svg>
      <span className={`size-px rounded-full ${running ? "bg-white" : ""}`} />
    </button>
  );
}

function Desktop() {
  return (
    <div className="flex h-[24px] shrink-0 items-center bg-linear-to-r from-[#0a1733] via-[#071d38] to-[#0e3040]">
      <div className="flex-1">
        <svg viewBox="0 0 190 24" className="block h-[24px] w-[190px]" aria-hidden="true">
          <path d="M11 12l3-3 4-2 1-2 4 0 2 3-2 3-4 1-3 2-3-1z" fill="#817c70" />
          <path d="M14 10l3-1 1 2-3 1zM20 7l3-1v3l-2 0z" fill="#3e3c38" />
          <path d="M54 12.500l4-1" stroke="#b9c4cd" strokeWidth=".9" />
          <path d="M20 17l10 1M80 15l12 1M120 8l14 1M100 20l16 0" stroke="#16294a" />
        </svg>
      </div>
      <div className="flex h-[23px] items-center gap-1 rounded-[6px] border border-[#2d3f53] bg-[#17293d] px-[3px] pt-[2px]">
        {DOCK.map((d) => <DockItem key={d[0]} item={d} />)}
        <div className="h-4 border-l border-[#43566a]" />
        {DOCK_END.map((d) => <DockItem key={d[0]} item={d} />)}
      </div>
      <div className="flex flex-1 justify-end">
        <svg viewBox="0 0 190 24" className="block h-[24px] w-[190px]" fill="#6d8b99" aria-hidden="true">
          {[[110, 9], [134, 14], [140, 20], [152, 8], [160, 16], [166, 5], [171, 12], [174, 19], [179, 8], [182, 15], [185, 21], [187, 11], [188, 4], [164, 21], [177, 3]].map(([x, y]) => <circle key={`${x}-${y}`} cx={x} cy={y} r=".5" />)}
        </svg>
      </div>
    </div>
  );
}

export default function App() {
  return (
    <div className="flex min-h-screen flex-col bg-linear-to-r from-[#468cac] to-[#72b2c6] font-[Inter,sans-serif] text-[6px] leading-[8px] font-medium [text-rendering:geometricPrecision]">
      <MenuBar />
      <TitleBar />
      <ToolBar />
      <PropertyBar />
      <main className="flex flex-1">
        <SideTools />
        <NodeTools />
        <Workspace />
        <ShapePanel />
      </main>
      <div className="shrink-0 bg-[#0a1a34]">
        <Palette />
        <StatusBar />
      </div>
      <Desktop />
    </div>
  );
}
